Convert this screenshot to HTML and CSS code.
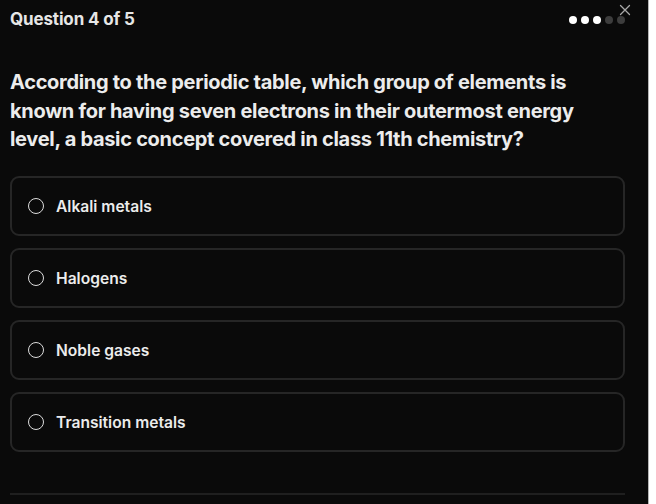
FILE: index.html
```html
<!DOCTYPE html>
<html>
<head>
<meta charset="utf-8">
<link rel="stylesheet" href="styles.css">
</head>
<body>
<div class="panel">
  <header class="top">
    <div class="title">Question 4 of 5</div>
    <div class="dots">
      <span class="dot on"></span><span class="dot on"></span><span class="dot on"></span><span class="dot"></span><span class="dot"></span>
    </div>
    <button class="close" aria-label="Close">
      <svg width="12" height="12" viewBox="0 0 12 12"><path d="M1.5 1.5 L10.5 10.5 M10.5 1.5 L1.5 10.5" stroke="#a8a8a8" stroke-width="1.3" stroke-linecap="round" fill="none"/></svg>
    </button>
  </header>
  <h1 class="question">According to the periodic table, which group of elements is known for having seven electrons in their outermost energy level, a basic concept covered in class 11th chemistry?</h1>
  <div class="options">
    <label class="option"><span class="radio"></span><span class="label">Alkali metals</span></label>
    <label class="option"><span class="radio"></span><span class="label">Halogens</span></label>
    <label class="option"><span class="radio"></span><span class="label">Noble gases</span></label>
    <label class="option"><span class="radio"></span><span class="label">Transition metals</span></label>
  </div>
  <div class="footer-line"></div>
</div>
</body>
</html>
```
FILE: styles.css
```css
html, body {
  margin: 0;
  padding: 0;
  background: #ffffff;
}
body {
  font-family: Inter, "Noto Sans", sans-serif;
  color: #ececec;
}
.panel {
  width: 649px;
  height: 504px;
  background: #0a0a0a;
  border-right: 1px solid #b5b5b5;
  box-sizing: border-box;
  padding: 0 23px 0 10px;
  position: relative;
  display: flex;
  flex-direction: column;
}
.top {
  height: 40px;
  display: flex;
  align-items: center;
  justify-content: space-between;
}
.title {
  font-size: 17px;
  font-weight: 700;
  letter-spacing: -0.15px;
  color: #e6e6e6;
  margin-top: -2px;
}
.dots {
  display: flex;
  gap: 4px;
  margin-right: 0;
  margin-top: -1px;
}
.dot {
  width: 8px;
  height: 8px;
  border-radius: 50%;
  background: #3d3d3d;
}
.dot.on {
  background: #ffffff;
}
.close {
  position: absolute;
  top: 4px;
  right: 17px;
  width: 12px;
  height: 12px;
  padding: 0;
  border: 0;
  background: transparent;
  display: flex;
}
.question {
  margin: 28px 0 0 0;
  font-size: 20px;
  line-height: 28.5px;
  font-weight: 700;
  letter-spacing: -0.3px;
  color: #ececec;
}
.options {
  margin-top: 22px;
  display: flex;
  flex-direction: column;
  gap: 12px;
}
.option {
  height: 60px;
  box-sizing: border-box;
  border: 2px solid #262626;
  border-radius: 9px;
  display: flex;
  align-items: center;
  padding-left: 16px;
  gap: 12px;
}
.radio {
  width: 16px;
  height: 16px;
  box-sizing: border-box;
  border: 1.5px solid #dcdcdc;
  border-radius: 50%;
  margin-top: 1px;
}
.label {
  font-size: 15.6px;
  font-weight: 600;
  letter-spacing: 0;
  color: #ececec;
  padding-top: 2px;
}
.footer-line {
  margin-top: 41px;
  height: 2px;
  background: #1f1f1f;
}
```
